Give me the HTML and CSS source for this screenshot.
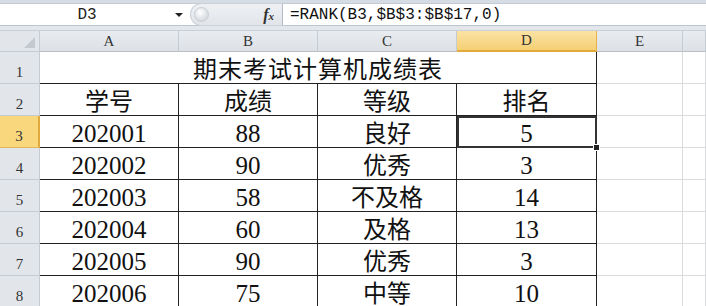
FILE: index.html
```html
<!DOCTYPE html>
<html lang="zh">
<head>
    <meta charset="UTF-8">
    <title>期末考试计算机成绩表</title>
    <link rel="stylesheet" href="styles.css">
</head>
<body>
    <div class="top-band"></div>
    <div class="formula-bar">
        <div class="name-box">
            <span class="name-text">D3</span>
            <span class="drop-arrow"></span>
        </div>
        <div class="fx-zone">
            <span class="knob"></span>
            <span class="fx"><i>f</i><small>x</small></span>
        </div>
        <div class="formula">=RANK(B3,$B$3:$B$17,0)</div>
    </div>
    <div class="bar-gap"></div>

    <div class="sheet">
        <div class="corner"><span class="corner-tri"></span></div>
        <div class="col-head">A</div>
        <div class="col-head">B</div>
        <div class="col-head">C</div>
        <div class="col-head active">D</div>
        <div class="col-head">E</div>
        <div class="col-head"></div>

        <div class="row-head">1</div>
        <div class="cell title">期末考试计算机成绩表</div>
        <div class="cell"></div>
        <div class="cell"></div>

        <div class="row-head">2</div>
        <div class="cell boxed">学号</div>
        <div class="cell boxed">成绩</div>
        <div class="cell boxed">等级</div>
        <div class="cell boxed">排名</div>
        <div class="cell"></div>
        <div class="cell"></div>

        <div class="row-head active">3</div>
        <div class="cell boxed num">202001</div>
        <div class="cell boxed num">88</div>
        <div class="cell boxed">良好</div>
        <div class="cell boxed num selected">5<span class="handle"></span></div>
        <div class="cell"></div>
        <div class="cell"></div>

        <div class="row-head">4</div>
        <div class="cell boxed num">202002</div>
        <div class="cell boxed num">90</div>
        <div class="cell boxed">优秀</div>
        <div class="cell boxed num">3</div>
        <div class="cell"></div>
        <div class="cell"></div>

        <div class="row-head">5</div>
        <div class="cell boxed num">202003</div>
        <div class="cell boxed num">58</div>
        <div class="cell boxed">不及格</div>
        <div class="cell boxed num">14</div>
        <div class="cell"></div>
        <div class="cell"></div>

        <div class="row-head">6</div>
        <div class="cell boxed num">202004</div>
        <div class="cell boxed num">60</div>
        <div class="cell boxed">及格</div>
        <div class="cell boxed num">13</div>
        <div class="cell"></div>
        <div class="cell"></div>

        <div class="row-head">7</div>
        <div class="cell boxed num">202005</div>
        <div class="cell boxed num">90</div>
        <div class="cell boxed">优秀</div>
        <div class="cell boxed num">3</div>
        <div class="cell"></div>
        <div class="cell"></div>

        <div class="row-head">8</div>
        <div class="cell boxed num">202006</div>
        <div class="cell boxed num">75</div>
        <div class="cell boxed">中等</div>
        <div class="cell boxed num">10</div>
        <div class="cell"></div>
        <div class="cell"></div>
    </div>
</body>
</html>
```

FILE: styles.css
```css
:root {
    --grid-line: #dadcdd;
    --head-bg: #e2e6eb;
    --head-line: #c5cbd3;
    --ink: #111;
    --mono: "Liberation Mono", "DejaVu Sans Mono", monospace;
    --head-font: "Liberation Serif", serif;
    --cell-font: "Liberation Serif", "Noto Sans CJK SC", serif;
}

* { box-sizing: border-box; }

body {
    margin: 0;
    width: 706px;
    height: 306px;
    overflow: hidden;
    background: #fff;
    font-family: var(--cell-font);
    color: var(--ink);
}

.top-band {
    height: 4px;
    background: #d6dce4;
    border-bottom: 1px solid #c3cad3;
}

.formula-bar {
    display: flex;
    height: 22px;
    background: #fff;
    border-bottom: 1px solid #bcc4ce;
}

.name-box {
    width: 190px;
    display: flex;
    align-items: center;
    position: relative;
}
.name-text {
    flex: 1;
    text-align: center;
    font-family: var(--mono);
    font-size: 16px;
    padding-left: 4px;
    padding-right: 20px;
    color: #222;
}
.drop-arrow {
    position: absolute;
    left: 175px;
    top: 9px;
    width: 0;
    height: 0;
    border-left: 4px solid transparent;
    border-right: 4px solid transparent;
    border-top: 4px solid #222;
}

.fx-zone {
    width: 93px;
    display: flex;
    align-items: center;
    justify-content: space-between;
    padding: 0 8px 0 3px;
    background: linear-gradient(#eef0f3, #e1e5ea);
    border: 1px solid #ccd2d9;
    border-right: 1px solid #b5bcc6;
    border-radius: 12px 0 0 12px;
    margin-top: -1px;
    height: 23px;
}
.knob {
    width: 15px;
    height: 15px;
    border-radius: 50%;
    background: radial-gradient(circle at 40% 35%, #ffffff, #d7dbe0 70%);
    border: 1px solid #c8cdd4;
}
.fx {
    font-family: "Liberation Serif", serif;
    font-weight: bold;
    font-style: italic;
    font-size: 15px;
    color: #333;
}
.fx i { font-size: 16px; }
.fx small { font-size: 11px; }

.formula {
    flex: 1;
    padding-left: 7px;
    display: flex;
    align-items: center;
    font-family: var(--mono);
    font-size: 16px;
    color: #111;
    white-space: nowrap;
}

.bar-gap {
    height: 5px;
    background: #e3e7ec;
    border-bottom: 1px solid #c9cfd7;
}

.sheet {
    display: grid;
    grid-template-columns: 40px 139px 139px 139px 140px 86px 1fr;
    grid-template-rows: 21px repeat(8, 32px);
}

.corner {
    background: var(--head-bg);
    border-right: 1px solid var(--head-line);
    border-bottom: 1px solid var(--head-line);
    position: relative;
}
.corner-tri {
    position: absolute;
    right: 4px;
    bottom: 3px;
    width: 0;
    height: 0;
    border-left: 11px solid transparent;
    border-bottom: 11px solid #c4c9cf;
}

.col-head {
    background: linear-gradient(#e8ebef, #dde1e6);
    border-right: 1px solid var(--head-line);
    border-bottom: 1px solid #b7bec8;
    display: flex;
    align-items: center;
    justify-content: center;
    font-family: var(--head-font);
    font-size: 15px;
    color: #333;
}
.col-head.active {
    background: linear-gradient(#fbe3a6, #f5cf73);
    border-right-color: #e6b24c;
    border-bottom: 2px solid #e2a93c;
}

.row-head {
    background: var(--head-bg);
    border-right: 1px solid var(--head-line);
    border-bottom: 1px solid var(--head-line);
    display: flex;
    align-items: flex-end;
    justify-content: center;
    padding-bottom: 2px;
    font-family: var(--head-font);
    font-size: 15px;
    color: #333;
}
.row-head.active {
    background: #f9d77c;
    border-right: 2px solid #e2a93c;
    border-bottom-color: #e2b65c;
}

.cell {
    border-right: 1px solid var(--grid-line);
    border-bottom: 1px solid var(--grid-line);
    display: flex;
    align-items: flex-end;
    justify-content: center;
    font-size: 24px;
    line-height: 24px;
    padding-bottom: 1px;
    white-space: nowrap;
}
.cell.title {
    grid-column: span 4;
    border-right: 1px solid #222;
    border-bottom: 1px solid #222;
    letter-spacing: 1px;
}
.cell.boxed {
    border-right: 1px solid #222;
    border-bottom: 1px solid #222;
}
.cell.num { font-size: 25px; }

.cell.selected {
    position: relative;
    outline: 2px solid #333;
    outline-offset: -2px;
    box-shadow: inset 0 0 0 3px #fff;
}
.handle {
    position: absolute;
    right: -4px;
    bottom: -4px;
    width: 7px;
    height: 7px;
    background: #222;
    border: 1px solid #fff;
}
```
